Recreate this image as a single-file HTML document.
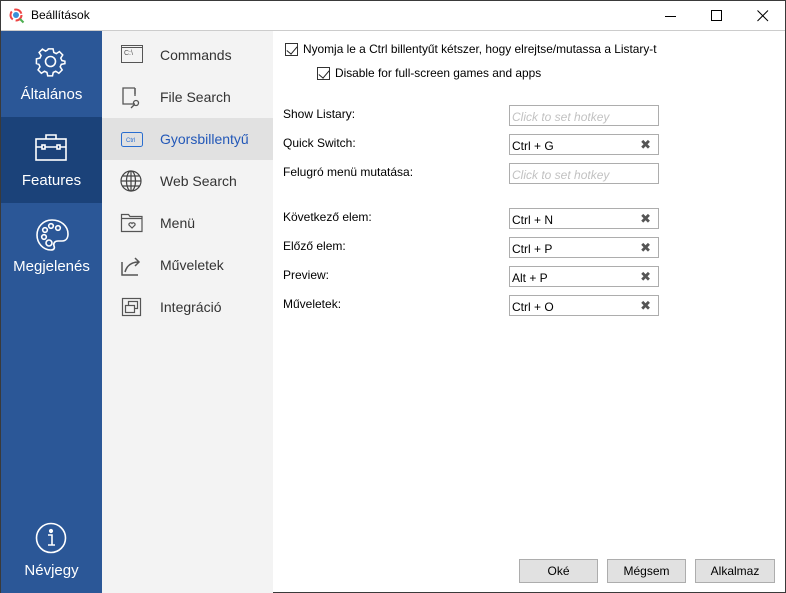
<!DOCTYPE html>
<html><head><meta charset="utf-8"><style>
*{margin:0;padding:0;box-sizing:border-box}
body{width:786px;height:593px;overflow:hidden;font-family:"Segoe UI","Liberation Sans","DejaVu Sans",sans-serif;background:#fff;position:relative}
.win{position:absolute;left:0;top:0;width:786px;height:593px;border:1px solid #3a3a3a}
.title{position:absolute;left:0;top:0;width:784px;height:30px;background:#fff;border-bottom:1px solid #ccc}
.title .t{position:absolute;left:30px;top:7px;font-size:12px;color:#000}
.side{position:absolute;left:0;top:30px;width:101px;height:562px;background:#2b5797;color:#fff}
.si{position:absolute;left:0;width:101px;height:86px;text-align:center;font-size:15px}
.si svg{position:absolute;left:34px;top:15px}
.si span{position:absolute;left:0;right:0;top:55px}
.nav{position:absolute;left:101px;top:30px;width:171px;height:562px;background:#f3f3f3}
.ni{position:absolute;left:0;width:171px;height:42px;font-size:14px;color:#333}
.ni span{position:absolute;left:58px;top:13px}
.ni svg{position:absolute;left:18px;top:10px}
.lbl{position:absolute;left:282px;font-size:12px;color:#000}
.box{position:absolute;left:508px;width:150px;height:21px;border:1px solid #adadad;font-size:12px;padding:4px 0 0 2px;color:#000;background:#fff}
.box.e{color:#c2c2c2;font-style:italic}
.box b{position:absolute;right:7px;top:2px;font-size:13px;color:#555}
.btn{position:absolute;top:558px;height:24px;border:1px solid #adadad;background:#e1e1e1;font-size:12px;text-align:center;padding-top:4px}
.cb{position:absolute;width:13px;height:13px;border:1px solid #333;background:#fff}
.cb:after{content:"";position:absolute;left:3px;top:0px;width:5px;height:9px;border:solid #222;border-width:0 1.6px 1.6px 0;transform:rotate(40deg)}
</style></head><body><div class="win">
<div class="title">
<svg style="position:absolute;left:8px;top:7px" width="16" height="16" viewBox="0 0 16 16"><circle cx="7" cy="7" r="5.5" fill="none" stroke="#e44" stroke-width="2" stroke-dasharray="9 3"/><circle cx="7" cy="7" r="3" fill="#3a8fd8"/><line x1="11" y1="11" x2="14.5" y2="14.5" stroke="#4caf50" stroke-width="2"/></svg>
<div class="t">Beállítások</div>
<svg style="position:absolute;left:664px;top:9px" width="12" height="12"><line x1="0" y1="6.5" x2="11" y2="6.5" stroke="#000"/></svg>
<svg style="position:absolute;left:710px;top:9px" width="12" height="12"><rect x="0.5" y="0.5" width="10" height="10" fill="none" stroke="#000"/></svg>
<svg style="position:absolute;left:756px;top:9px" width="12" height="12"><path d="M0.5 0.5L11 11M11 0.5L0.5 11" stroke="#000"/></svg>
</div>
<div class="side">
<div class="si" style="top:0"><svg width="32" height="32" viewBox="0 0 32 32" fill="none" stroke="#fff" stroke-width="1.6"><path d="M13.5 3h5l.8 3.8 2.6 1.2 3.3-2.1 3.5 3.5-2.1 3.3 1.2 2.6L31 16v0 2.5l-3.8.8-1.2 2.6 2.1 3.3-3.5 3.5-3.3-2.1-2.6 1.2-.8 3.7h-5l-.8-3.7-2.6-1.2-3.3 2.1-3.5-3.5 2.1-3.3-1.2-2.6L1 18.5v-5l3.7-.8 1.2-2.6L3.8 6.8l3.5-3.5 3.3 2.1 2.1-1.2z" transform="scale(.95) translate(0.5 0)"/><circle cx="15.5" cy="15.5" r="5"/></svg><span>Általános</span></div>
<div class="si" style="top:86px;background:#1b4279"><svg width="32" height="32" viewBox="0 0 32 32" fill="none" stroke="#fff" stroke-width="1.6"><rect x="1" y="7" width="30" height="21"/><path d="M11 7V3h10v4M1 15h30"/><rect x="7" y="13" width="3" height="4" fill="#1b4279"/><rect x="22" y="13" width="3" height="4" fill="#1b4279"/></svg><span>Features</span></div>
<div class="si" style="top:172px"><svg width="34" height="34" viewBox="0 0 34 34" fill="none" stroke="#fff" stroke-width="1.6"><path d="M17 2C8 2 2 9 2 17c0 8 6 15 14 15 3 0 4-2 3-4-1-3 1-5 4-5h4c4 0 6-3 6-7C33 8 26 2 17 2z"/><circle cx="10" cy="12" r="2.3"/><circle cx="16" cy="8" r="2.3"/><circle cx="23" cy="10" r="2.3"/><circle cx="9" cy="19" r="2.3"/><circle cx="14" cy="25" r="3"/></svg><span>Megjelenés</span></div>
<div class="si" style="top:476px"><svg width="32" height="32" viewBox="0 0 32 32" fill="none" stroke="#fff" stroke-width="1.6"><circle cx="16" cy="16" r="14.5"/><path d="M13 13h4v10M13 23h7" /><circle cx="16" cy="9" r="1.3" fill="#fff"/></svg><span>Névjegy</span></div>
</div>
<div class="nav">
<div class="ni" style="top:3px"><svg width="24" height="22" viewBox="0 0 24 22" fill="none" stroke="#555"><rect x="1.5" y="1.5" width="21" height="17"/><line x1="1.5" y1="3.5" x2="22.5" y2="3.5"/><text x="4" y="11" font-size="7" fill="#555" stroke="none" font-family="Liberation Sans">C:\</text></svg><span>Commands</span></div>
<div class="ni" style="top:45px"><svg width="24" height="24" viewBox="0 0 24 24" fill="none" stroke="#555" stroke-width="1.3"><path d="M15 18H3V2h12M15 2v6"/><circle cx="16" cy="17" r="2.5"/><line x1="14" y1="19" x2="11" y2="22"/><line x1="15" y1="2" x2="15" y2="10"/></svg><span>File Search</span></div>
<div class="ni" style="top:87px;background:#e1e1e1"><svg width="24" height="22" viewBox="0 0 24 22" fill="none" stroke="#2a6ed0"><rect x="1.5" y="4.5" width="21" height="14" rx="2"/><text x="6" y="14" font-size="6" fill="#2a6ed0" stroke="none" font-family="Liberation Sans">Ctrl</text></svg><span style="color:#2358b8">Gyorsbillentyű</span></div>
<div class="ni" style="top:129px"><svg width="24" height="24" viewBox="0 0 24 24" fill="none" stroke="#444" stroke-width="1.2"><circle cx="11" cy="11" r="10"/><ellipse cx="11" cy="11" rx="4.5" ry="10"/><line x1="11" y1="1" x2="11" y2="21"/><line x1="1" y1="11" x2="21" y2="11"/><line x1="2.5" y1="6" x2="19.5" y2="6"/><line x1="2.5" y1="16" x2="19.5" y2="16"/></svg><span>Web Search</span></div>
<div class="ni" style="top:171px"><svg width="24" height="22" viewBox="0 0 24 22" fill="none" stroke="#555" stroke-width="1.2"><path d="M1.5 2.5h7l1.5 2h12v15h-20.5z M1.5 6.5h21"/><path d="M12 16l-3-3a1.7 1.7 0 0 1 3-1.5a1.7 1.7 0 0 1 3 1.5z"/></svg><span>Menü</span></div>
<div class="ni" style="top:213px"><svg width="24" height="24" viewBox="0 0 24 24" fill="none" stroke="#555" stroke-width="1.5"><path d="M2 8v13h16M5 18c2-7 7-10 14-10M15 4l4 4-4 4"/></svg><span>Műveletek</span></div>
<div class="ni" style="top:255px"><svg width="24" height="22" viewBox="0 0 24 22" fill="none" stroke="#555" stroke-width="1.2"><rect x="2.5" y="2.5" width="18" height="17"/><rect x="8.5" y="5.5" width="9" height="7"/><rect x="5.5" y="9.5" width="9" height="7" fill="#f3f3f3"/></svg><span>Integráció</span></div>
</div>
<div class="cb" style="left:284px;top:42px"></div>
<div class="lbl" style="left:302px;top:41px;font-size:11.9px">Nyomja le a Ctrl billentyűt kétszer, hogy elrejtse/mutassa a Listary-t</div>
<div class="cb" style="left:316px;top:66px"></div>
<div class="lbl" style="left:334px;top:65px;font-size:11.9px">Disable for full-screen games and apps</div>
<div class="lbl" style="top:106px">Show Listary:</div>
<div class="box e" style="top:104px">Click to set hotkey</div>
<div class="lbl" style="top:135px">Quick Switch:</div>
<div class="box" style="top:133px">Ctrl + G<b>✖</b></div>
<div class="lbl" style="top:164px">Felugró menü mutatása:</div>
<div class="box e" style="top:162px">Click to set hotkey</div>
<div class="lbl" style="top:209px">Következő elem:</div>
<div class="box" style="top:207px">Ctrl + N<b>✖</b></div>
<div class="lbl" style="top:238px">Előző elem:</div>
<div class="box" style="top:236px">Ctrl + P<b>✖</b></div>
<div class="lbl" style="top:267px">Preview:</div>
<div class="box" style="top:265px">Alt + P<b>✖</b></div>
<div class="lbl" style="top:296px">Műveletek:</div>
<div class="box" style="top:294px">Ctrl + O<b>✖</b></div>
<div class="btn" style="left:518px;width:79px">Oké</div>
<div class="btn" style="left:606px;width:79px">Mégsem</div>
<div class="btn" style="left:694px;width:80px">Alkalmaz</div>
</div></body></html>
